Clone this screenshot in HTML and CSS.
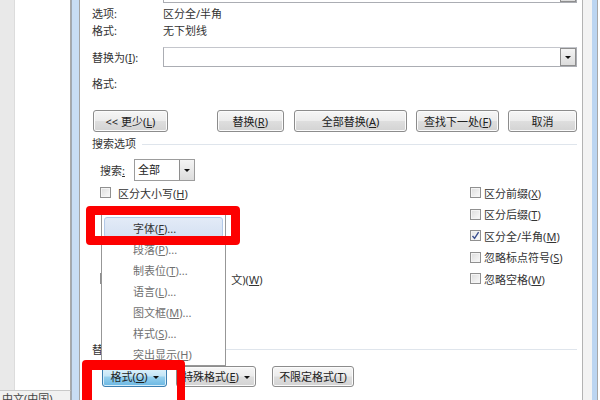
FILE: index.html
```html
<!DOCTYPE html>
<html lang="zh-CN">
<head>
<meta charset="utf-8">
<title>查找和替换</title>
<link rel="stylesheet" href="styles.css">
</head>
<body>
<div class="screen">
  <div class="doc">
    <div class="doc-area">
      <div class="doc-gutter"></div>
      <div class="doc-page"></div>
    </div>
    <div class="statusbar">中文(中国)</div>
  </div>
  <div class="frame frame-left"></div>
  <div class="dialog">
    <div class="combo-row top-row">
      <span class="label"></span>
      <div class="combo"><div class="combo-input"></div><div class="drop-btn"><i class="tri"></i></div></div>
    </div>
    <div class="info-row first"><span class="label">选项:</span><span class="value">区分全/半角</span></div>
    <div class="info-row"><span class="label">格式:</span><span class="value">无下划线</span></div>
    <div class="combo-row replace-row">
      <span class="label">替换为(<u>I</u>):</span>
      <div class="combo"><div class="combo-input"></div><div class="drop-btn"><i class="tri"></i></div></div>
    </div>
    <div class="info-row fmt2"><span class="label">格式:</span></div>
    <div class="btn-row">
      <button class="btn b-less">&lt;&lt; 更少(<u>L</u>)</button>
      <button class="btn b-replace">替换(<u>R</u>)</button>
      <button class="btn b-all">全部替换(<u>A</u>)</button>
      <button class="btn b-next">查找下一处(<u>F</u>)</button>
      <button class="btn b-cancel">取消</button>
    </div>
    <div class="group-title search-title"><span>搜索选项</span><span class="rule"></span></div>
    <div class="search-row">
      <span class="search-label">搜索<u>:</u></span>
      <div class="select"><span class="select-val">全部</span><div class="drop-btn"><i class="tri"></i></div></div>
    </div>
    <div class="options">
      <div class="opt"><span class="box"></span><span>区分大小写(<u>H</u>)</span></div>
      <div class="opt"><span class="box"></span><span>区分前缀(<u>X</u>)</span></div>
      <div class="opt covered"><span class="box"></span><span>全字匹配(<u>Y</u>)</span></div>
      <div class="opt"><span class="box"></span><span>区分后缀(<u>T</u>)</span></div>
      <div class="opt covered"><span class="box"></span><span>使用通配符(<u>U</u>)</span></div>
      <div class="opt"><span class="box checked"><svg viewBox="0 0 9 9" width="9" height="9"><path d="M1.5 5 L3.6 7.4 L7.6 1.2" fill="none" stroke="#3a4f8f" stroke-width="1.4"/></svg></span><span>区分全/半角(<u>M</u>)</span></div>
      <div class="opt covered"><span class="box"></span><span>同音(英文)(<u>K</u>)</span></div>
      <div class="opt"><span class="box"></span><span>忽略标点符号(<u>S</u>)</span></div>
      <div class="opt"><span class="box"></span><span class="clipped"><span class="hidden-part">查找单词的所有形式(英</span>文)(<u>W</u>)</span></div>
      <div class="opt"><span class="box"></span><span>忽略空格(<u>W</u>)</span></div>
    </div>
    <div class="group-title replace-title"><span>替<span class="hidden-part">换</span></span><span class="rule"></span></div>
    <div class="btn-row bottom-row">
      <button class="btn b-format">格式(<u>O</u>)<i class="tri"></i></button>
      <button class="btn b-special">特殊格式(<u>E</u>)<i class="tri"></i></button>
      <button class="btn b-nofmt">不限定格式(<u>T</u>)</button>
    </div>
  </div>
  <div class="frame frame-right"></div>
</div>

<div class="menu">
  <div class="menu-item hot">字体(<u>F</u>)...</div>
  <div class="menu-item">段落(<u>P</u>)...</div>
  <div class="menu-item">制表位(<u>T</u>)...</div>
  <div class="menu-item">语言(<u>L</u>)...</div>
  <div class="menu-item">图文框(<u>M</u>)...</div>
  <div class="menu-item">样式(<u>S</u>)...</div>
  <div class="menu-item">突出显示(<u>H</u>)</div>
</div>
<div class="mark mark-menu"></div>
<div class="mark mark-btn"></div>
</body>
</html>
```

FILE: styles.css
```css
* { box-sizing: border-box; }
html, body { margin: 0; padding: 0; }
body {
  width: 600px;
  height: 400px;
  overflow: hidden;
  position: relative;
  background: #fff;
  font-family: "Noto Sans", "Noto Sans CJK SC", sans-serif;
  font-size: 11px;
  color: #333;
}
u { text-decoration: underline; text-underline-offset: 1px; }

.screen { display: flex; height: 400px; }

/* document behind the dialog */
.doc { width: 71px; display: flex; flex-direction: column; }
.doc-area { flex: 1; display: flex; }
.doc-gutter { width: 15px; background: #e9e9e9; border-right: 1px solid #dcdcdc; }
.doc-page { flex: 1; background: #fff; border-right: 1px solid #a9a9a9; }
.statusbar {
  height: 10px;
  background: #f1f1f1;
  border-top: 1px solid #c9c9c9;
  border-right: 1px solid #a9a9a9;
  font-size: 11px;
  line-height: 15px;
  padding-left: 2px;
  color: #444;
  overflow: hidden;
  white-space: nowrap;
}

.frame { height: 400px; }
.frame-left {
  width: 9px;
  background: #c8ddf4;
  border-left: 1px solid #a0a8b2;
  border-right: 1px solid #a3a3a3;
}
.frame-right {
  width: 17px;
  background: linear-gradient(to right, #f3f3f3 0, #f3f3f3 9px, #bcd5f1 9px, #bcd5f1 14px, #a7a7a7 14px, #a7a7a7 15px, #fff 15px);
}

.dialog {
  width: 503px;
  height: 400px;
  background: #fff;
  border-right: 1px solid #b3b3b3;
  padding: 0 5px 0 12px;
  display: flex;
  flex-direction: column;
}

.label { width: 71px; flex: none; }
.info-row { display: flex; height: 17px; line-height: 17px; }
.info-row.first { margin-top: 2px; }
.info-row.fmt2 { margin-top: 8px; }
.value { color: #333; }

.combo-row { display: flex; align-items: center; }
.top-row { margin-top: -20px; height: 23px; }
.replace-row { margin-top: 8px; height: 20px; }
.combo {
  flex: 1;
  height: 100%;
  display: flex;
  border: 1px solid #abadb3;
  border-top-color: #c4c6cc;
  background: #fff;
}
.combo-input { flex: 1; }
.drop-btn {
  width: 16px;
  height: 100%;
  border: 1px solid #8e8e8e;
  background: linear-gradient(#f4f4f4, #dcdcdc);
  display: flex;
  align-items: center;
  justify-content: center;
}
.tri {
  display: inline-block;
  width: 0; height: 0;
  border-left: 3px solid transparent;
  border-right: 3px solid transparent;
  border-top: 3px solid #111;
}
.btn .tri { margin-left: 5px; vertical-align: middle; position: relative; top: -1px; }

.btn-row { display: flex; margin-top: 18px; height: 22px; }
.btn {
  height: 100%;
  font: inherit;
  color: #222;
  border: 1px solid #8c8c8c;
  border-radius: 3px;
  background: linear-gradient(#f6f6f6 0%, #ececec 48%, #dedede 52%, #d3d3d3 100%);
  box-shadow: inset 0 0 0 1px #fbfbfb;
  padding: 0;
  text-align: center;
  white-space: nowrap;
}
.b-less { width: 75px; margin-left: 1px; }
.b-replace { width: 67px; margin-left: 49px; }
.b-all { width: 114px; margin-left: 10px; }
.b-next { width: 83px; margin-left: 9px; }
.b-cancel { width: 69px; margin-left: 9px; }

.group-title { display: flex; align-items: center; height: 16px; line-height: 16px; }
.search-title { margin-top: 4px; }
.group-title .rule { flex: 1; height: 1px; background: #dfe5ec; margin-left: 6px; }
.replace-title { margin-top: 52px; }

.search-row { display: flex; align-items: center; margin-top: 7px; height: 22px; padding-left: 8px; }
.search-label { width: 34px; }
.select {
  width: 61px;
  height: 22px;
  border: 1px solid #9c9c9c;
  display: flex;
  background: #fff;
}
.select-val { flex: 1; line-height: 20px; padding-left: 3px; color: #222; }
.select .drop-btn { width: 15px; border-width: 0 0 0 1px; }

.options {
  margin-top: 1px;
  display: grid;
  grid-template-columns: 370px 1fr;
  grid-auto-rows: 21.5px;
  padding-left: 8px;
}
.opt { display: flex; align-items: center; white-space: nowrap; }
.opt.covered { visibility: hidden; }
.hidden-part { visibility: hidden; }
.box {
  width: 11px; height: 11px;
  border: 1px solid #909090;
  background: linear-gradient(135deg, #dcdcdc, #fafafa);
  box-shadow: inset 0 0 0 1px #f4f4f4;
  margin-right: 7px;
  display: flex;
  align-items: center;
  justify-content: center;
}
.options .opt:nth-child(even) .box { margin-right: 3px; }
.box.checked { background: linear-gradient(135deg, #e6e6e6, #fdfdfd); }

.bottom-row { margin-top: 8px; height: 21px; }
.b-format {
  width: 65px; margin-left: 10px;
  border-color: #3c7fb1;
  background: linear-gradient(#e4f4fc 0%, #c4e5f6 48%, #98d1ef 52%, #6ab7e2 100%);
  box-shadow: inset 0 0 0 1px #d6eefb;
}
.b-special { width: 80px; margin-left: 9px; }
.b-nofmt { width: 82px; margin-left: 16px; }

/* dropdown menu overlay */
.menu {
  position: absolute;
  left: 101px;
  top: 214px;
  width: 125px;
  height: 152px;
  background: #fff;
  border: 1px solid #979797;
  padding: 2px;
}
.menu-item {
  height: 21px;
  line-height: 21px;
  padding-left: 28px;
  color: #707070;
  border: 1px solid transparent;
  border-radius: 3px;
}
.menu-item.hot {
  color: #333;
  background: linear-gradient(#e3ebf7, #d5e1f2);
  border-color: #b3c9e8;
}

/* red annotation boxes */
.mark {
  position: absolute;
  border: 9px solid #fd0000;
  border-radius: 4px;
}
.mark-menu { left: 86px; top: 206px; width: 154px; height: 39px; }
.mark-btn { left: 82px; top: 360px; width: 103px; height: 52px; border-width: 10px 8px 10px 10px; }
```
